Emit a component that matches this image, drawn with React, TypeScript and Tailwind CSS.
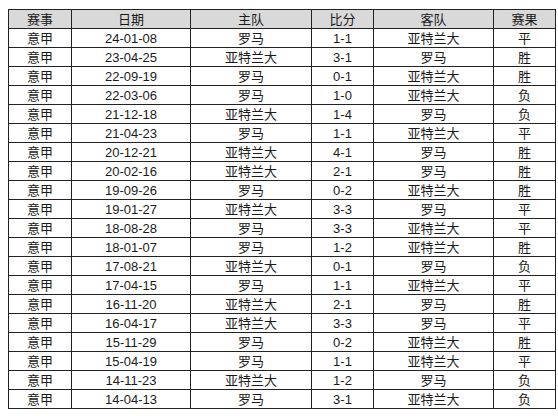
import { Fragment } from "react";

const header = ["赛事", "日期", "主队", "比分", "客队", "赛果"];

const rows: string[][] = [
	["24-01-08", "罗马", "1-1", "亚特兰大", "平"],
	["23-04-25", "亚特兰大", "3-1", "罗马", "胜"],
	["22-09-19", "罗马", "0-1", "亚特兰大", "胜"],
	["22-03-06", "罗马", "1-0", "亚特兰大", "负"],
	["21-12-18", "亚特兰大", "1-4", "罗马", "负"],
	["21-04-23", "罗马", "1-1", "亚特兰大", "平"],
	["20-12-21", "亚特兰大", "4-1", "罗马", "胜"],
	["20-02-16", "亚特兰大", "2-1", "罗马", "胜"],
	["19-09-26", "罗马", "0-2", "亚特兰大", "胜"],
	["19-01-27", "亚特兰大", "3-3", "罗马", "平"],
	["18-08-28", "罗马", "3-3", "亚特兰大", "平"],
	["18-01-07", "罗马", "1-2", "亚特兰大", "胜"],
	["17-08-21", "亚特兰大", "0-1", "罗马", "负"],
	["17-04-15", "罗马", "1-1", "亚特兰大", "平"],
	["16-11-20", "亚特兰大", "2-1", "罗马", "胜"],
	["16-04-17", "亚特兰大", "3-3", "罗马", "平"],
	["15-11-29", "罗马", "0-2", "亚特兰大", "胜"],
	["15-04-19", "罗马", "1-1", "亚特兰大", "平"],
	["14-11-23", "亚特兰大", "1-2", "罗马", "负"],
	["14-04-13", "罗马", "3-1", "亚特兰大", "负"]
];

const Cell = ({ text, head }: { text: string; head?: boolean }) => (
	<div
		className={`h-[19px] border-t border-l border-[#222] flex items-center justify-center leading-none ${
			head ? "bg-[#d9d9d9]" : "bg-white"
		}`}
	>
		{text}
	</div>
);

export default function App() {
	return (
		<div className="w-[558px] h-[416px] bg-white pt-[9px] pl-[8px] text-[13px] text-[#1a1a1a] font-['Liberation_Sans','Noto_Sans_CJK_SC',sans-serif]">
			<div className="grid grid-cols-[63px_119px_121px_62px_120px_62px] w-[548px] border-r border-b border-[#222]">
				{header.map((h) => (
					<Cell key={h} text={h} head />
				))}
				{rows.map((r, i) => (
					<Fragment key={i}>
						<Cell text="意甲" />
						{r.map((c, j) => (
							<Cell key={j} text={c} />
						))}
					</Fragment>
				))}
			</div>
		</div>
	);
}
